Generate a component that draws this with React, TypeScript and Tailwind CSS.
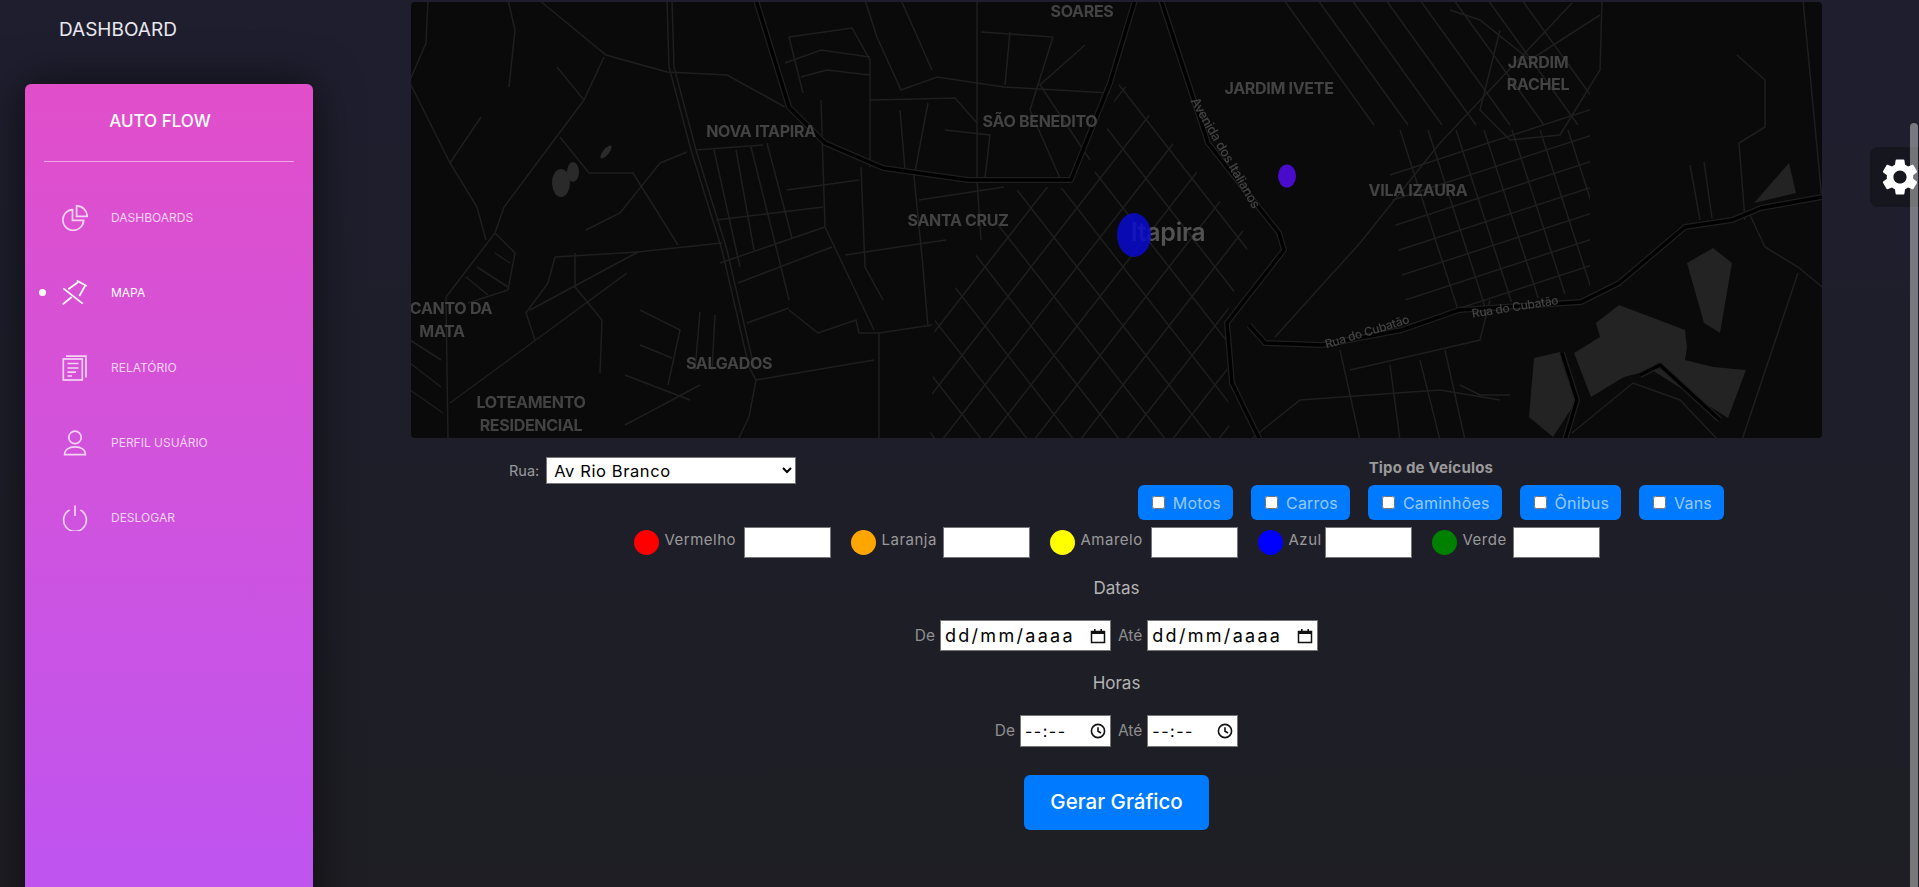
import { MdSettings } from "react-icons/md";

const font = "[font-family:Inter,'Liberation_Sans',sans-serif]";

// road polylines, in page coordinates of the reference
const roads = [
  "667,0 669,67 691,150 722,250 749,367 756,380 749,417 738,440",
  "672,0 674,67 696,150 727,250 754,367",
  "539,0 606,55 667,72 727,75 785,107",
  "604,57 584,100 504,207 495,233 446,297 448,440",
  "410,83 432,127 450,163 477,207 486,240",
  "428,0 426,43 410,80",
  "508,0 515,30 509,87",
  "557,67 584,100",
  "481,117 450,163",
  "687,152 660,163 620,213 586,230",
  "560,137 589,173 633,173 678,245",
  "638,252 722,243",
  "555,257 638,252 530,310",
  "555,257 548,283 526,313 535,340",
  "575,253 575,287 602,320 600,373",
  "627,273 450,403",
  "410,340 441,360",
  "410,363 441,387",
  "410,390 443,413",
  "477,267 508,287",
  "466,277 488,295",
  "495,253 510,263",
  "495,233 515,253 508,290 468,303",
  "756,380 874,360",
  "789,310 818,333 856,320 859,333 879,333 932,325",
  "879,333 879,440",
  "714,150 740,267",
  "736,150 754,250",
  "751,147 776,247 789,300",
  "767,143 792,238",
  "696,150 763,145",
  "716,220 823,207",
  "787,190 859,180",
  "720,263 825,227",
  "738,283 832,247",
  "747,323 789,308",
  "821,100 825,227 874,330",
  "861,167 865,267 883,300",
  "845,255 946,240",
  "928,103 914,177 923,267 928,327",
  "789,37 803,93",
  "789,37 852,28 870,60 870,167",
  "785,63 821,50 870,57",
  "801,77 827,70 870,75",
  "870,100 955,98 977,123",
  "865,0 877,37 901,90 937,77 1004,87 1110,93",
  "977,0 977,180 981,240",
  "901,0 932,70",
  "981,32 1053,37",
  "919,200 1004,187",
  "640,310 680,330 668,385",
  "700,312 695,370",
  "715,315 712,370",
  "625,375 690,400",
  "640,345 672,358",
  "625,425 700,385",
  "1010,32 1005,85",
  "1053,37 1030,110 1060,178",
  "1085,45 1040,85 1090,160",
  "900,110 905,170",
  "945,130 990,135 985,178",
  "1572,3 1440,143 1360,243 1275,337",
  "1450,10 1480,20 1530,60 1600,15",
  "1500,30 1480,110 1510,140 1560,135 1600,70 1602,0",
  "1803,0 1822,200",
  "1798,273 1742,440",
  "1749,213 1765,247 1798,267 1822,287",
  "1737,55 1765,80 1765,127 1739,143 1745,220",
  "1690,165 1700,220",
  "1704,162 1712,218",
  "1572,433 1633,383 1680,400 1718,440",
  "1250,440 1300,400 1440,390 1500,400",
  "1460,385 1480,395 1510,395",
  "1350,370 1480,340 1490,300",
  "1390,365 1400,440",
  "1420,360 1440,440",
  "1445,350 1465,440",
  "1340,350 1360,440",
];

const darkRoads = [
  "756,0 789,107 825,143 883,168 968,180 1071,180 1110,83 1135,0",
  "1161,0 1208,143 1279,233 1284,250 1227,323 1232,383 1260,440",
  "1249,325 1265,343 1322,345 1402,330 1459,310 1581,302 1619,283 1685,227 1732,220 1761,208 1822,197",
  "1562,353 1577,400 1565,440",
  "1640,375 1660,365 1720,420",
];

const blobs = [
  "1687,263 1713,248 1732,263 1720,333 1704,323",
  "1596,323 1619,305 1685,330 1687,347 1685,360 1713,367 1746,370 1728,418 1652,370 1624,377 1591,397 1574,353 1600,337",
  "1534,358 1560,352 1577,400 1553,437 1529,417",
  "1754,203 1789,163 1796,193",
];

const labels = [
  { t: "SOARES", x: 1082, y: 17 },
  { t: "NOVA ITAPIRA", x: 761, y: 137 },
  { t: "SÃO BENEDITO", x: 1040, y: 127 },
  { t: "SANTA CRUZ", x: 958, y: 226 },
  { t: "CANTO DA", x: 451, y: 314 },
  { t: "MATA", x: 442, y: 337 },
  { t: "SALGADOS", x: 729, y: 369 },
  { t: "LOTEAMENTO", x: 531, y: 408 },
  { t: "RESIDENCIAL", x: 531, y: 431 },
  { t: "JARDIM IVETE", x: 1279, y: 94 },
  { t: "JARDIM", x: 1538, y: 68 },
  { t: "RACHEL", x: 1538, y: 90 },
  { t: "VILA IZAURA", x: 1418, y: 196 },
];

// repeated street families, clipped to the blocks they belong to
const diamonds: string[] = [];
for (let i = -8; i < 14; i++) {
  const x = 900 + i * 46;
  diamonds.push(`${x},40 ${x + 312},440`);
  diamonds.push(`${x + 400},40 ${x + 88},440`);
}
const fans: string[] = [];
for (let i = 0; i < 9; i++) {
  fans.push(`${1250 + i * 34},0 ${1340 + i * 34},125`);
  fans.push(`${1400 + i * 28},130 ${1500 + i * 28},440`);
}
for (let i = 0; i < 9; i++) {
  fans.push(`1390,${275 + i * 26 - 100} 1620,${200 + i * 26 - 100}`);
}

function MapView() {
  return (
    <div className="h-[436px] w-full overflow-hidden rounded-[4px] bg-[#0a0a0a]">
      <svg viewBox="411 2 1411 436" className="block h-full w-full">
        <defs>
          <clipPath id="diamondBlock">
            <polygon points="1020,185 1090,190 1120,80 1195,170 1250,240 1225,320 1230,440 930,440 935,320" />
          </clipPath>
          <clipPath id="fanBlock">
            <polygon points="1265,0 1590,0 1590,290 1460,310 1410,335 1400,262 1385,140 1300,60" />
          </clipPath>
        </defs>
        <g className="blur-[0.6px]">
          {blobs.map((p) => (
            <polygon key={p} points={p} fill="#232323" />
          ))}
          <ellipse cx="561" cy="183" rx="9" ry="14" fill="#2a2a2a" />
          <ellipse cx="573" cy="172" rx="6" ry="10" fill="#2a2a2a" />
          <ellipse cx="606" cy="152" rx="3" ry="8" fill="#2a2a2a" transform="rotate(40 606 152)" />
          <g fill="none" stroke="#1f1f1f" strokeWidth="1.5">
            <g clipPath="url(#diamondBlock)">
              {diamonds.map((p) => (
                <polyline key={p} points={p} />
              ))}
            </g>
            <g clipPath="url(#fanBlock)">
              {fans.map((p) => (
                <polyline key={p} points={p} />
              ))}
            </g>
            {roads.map((p) => (
              <polyline key={p} points={p} />
            ))}
          </g>
          <g fill="none" strokeLinejoin="round">
            {darkRoads.map((p) => (
              <g key={p}>
                <polyline points={p} stroke="#1f1f1f" strokeWidth="6" />
                <polyline points={p} stroke="#000" strokeWidth="3.5" />
              </g>
            ))}
          </g>
          <g
            fill="#434343"
            fontFamily="Inter, sans-serif"
            fontWeight="700"
            fontSize="16"
            textAnchor="middle"
            letterSpacing="-0.3"
          >
            {labels.map((l) => (
              <text key={l.t} x={l.x} y={l.y}>
                {l.t}
              </text>
            ))}
            <text x="1168" y="241" fontSize="25" fontWeight="600" fill="#525252">
              Itapira
            </text>
            <text x="1367" y="336" fontSize="12" fontWeight="500" transform="rotate(-17 1367 332)">
              Rua do Cubatão
            </text>
            <text x="1515" y="311" fontSize="12" fontWeight="500" transform="rotate(-9 1515 307)">
              Rua do Cubatão
            </text>
            <text x="1225" y="157" fontSize="13" fontWeight="500" transform="rotate(60 1225 153)">
              Avenida dos Italianos
            </text>
          </g>
        </g>
        <ellipse cx="1134" cy="235" rx="17" ry="22" fill="#0a0ad0" fillOpacity="0.85" />
        <ellipse cx="1287" cy="176" rx="9" ry="11.5" fill="#4a0ccc" />
      </svg>
    </div>
  );
}

function PieIcon() {
  return (
    <svg viewBox="0 0 26 26" className="h-[26px] w-[26px]" fill="none" stroke="currentColor" strokeWidth="1.7">
      <path d="M10.5 4.6A10.4 10.4 0 1 0 21.6 15.4H10.5Z" />
      <path d="M14.6 0.9A10.6 10.6 0 0 1 25.2 11.4H14.6Z" />
    </svg>
  );
}

function PinIcon() {
  return (
    <svg viewBox="0 0 26 26" className="h-[26px] w-[26px]" fill="none" stroke="currentColor" strokeWidth="1.7">
      <path d="M14.7 .6 24.7 6" />
      <path d="M16.3 2 6.3 9.3" />
      <path d="M23 6 17.3 16" />
      <path d="M1.3 8.3 20.7 23.7" />
      <path d="M9.7 17 .7 24.3" />
    </svg>
  );
}

function ReportIcon() {
  return (
    <svg viewBox="0 0 26 26" className="h-[26px] w-[26px]" fill="none" stroke="currentColor" strokeWidth="1.7">
      <rect x="1.3" y="4" width="19" height="21" />
      <path d="M4 1.2H24V22.4" />
      <path d="M5.5 8.5H16.5M5.5 13H16.5M5.5 17.2H14M5.5 21H10" />
    </svg>
  );
}

function UserIcon() {
  return (
    <svg viewBox="0 0 26 26" className="h-[26px] w-[26px]" fill="none" stroke="currentColor" strokeWidth="1.7">
      <circle cx="13" cy="7.4" r="6.2" />
      <path d="M2.6 24.6C2.6 19.6 7 16.8 13 16.8S23.4 19.6 23.4 24.6Z" />
    </svg>
  );
}

function PowerIcon() {
  return (
    <svg viewBox="0 0 26 26" className="h-[26px] w-[26px]" fill="none" stroke="currentColor" strokeWidth="1.7">
      <path d="M13 .4V11" />
      <path d="M7.6 5A11.4 11.4 0 1 0 18.4 5" />
    </svg>
  );
}

const menu = [
  { label: "DASHBOARDS", icon: <PieIcon /> },
  { label: "MAPA", icon: <PinIcon />, active: true },
  { label: "RELATÓRIO", icon: <ReportIcon /> },
  { label: "PERFIL USUÁRIO", icon: <UserIcon /> },
  { label: "DESLOGAR", icon: <PowerIcon /> },
];

function Sidebar() {
  return (
    <aside className="h-[920px] w-[288px] rounded-t-[6px] bg-gradient-to-t from-[#ba54f5] to-[#e14eca] shadow-[0_0_45px_rgba(0,0,0,0.6)]">
      <div className="mx-[19px] flex h-[78px] items-center justify-center border-b border-white/50 pb-[1px] pr-[18px]">
        <span className="text-[17px] font-medium text-white">AUTO FLOW</span>
      </div>
      <nav className="mt-[18px] flex flex-col">
        {menu.map((m) => (
          <div key={m.label} className={`relative flex h-[75px] items-center pl-[37px] ${m.active ? "text-white" : "text-white/75"}`}>
            {m.active && <span className="absolute left-[14px] h-[7px] w-[7px] rounded-full bg-white" />}
            {m.icon}
            <span className="ml-[23px] text-[12px]">{m.label}</span>
          </div>
        ))}
      </nav>
    </aside>
  );
}

function VehicleCheck({ label }: { label: string }) {
  return (
    <label className="flex h-[35px] items-center gap-[8px] rounded-[6px] bg-[#007bff] pl-[14px] pr-[12px] text-[16px] tracking-[0.2px] text-white/60">
      <input type="checkbox" className="h-[13px] w-[13px]" />
      {label}
    </label>
  );
}

function ColorField({ name, color, labelWidth }: { name: string; color: string; labelWidth: string }) {
  return (
    <div className="flex items-center gap-[6px]">
      <span className="h-[25px] w-[25px] rounded-full" style={{ backgroundColor: color }} />
      <span className={`mb-[4px] text-[15px] tracking-[0.5px] whitespace-nowrap text-[#9a9a9a] ${labelWidth}`}>{name}</span>
      <input type="text" className="h-[31px] w-[87px] border border-[#767676] bg-white" />
    </div>
  );
}

function PickerField({ kind }: { kind: "date" | "time" }) {
  const isDate = kind === "date";
  return (
    <div className={`flex items-center justify-between border border-[#767676] bg-white pl-[4px] pr-[4px] text-black ${isDate ? "h-[31px] w-[171px]" : "h-[32px] w-[91px]"}`}>
      <span className={isDate ? "text-[18px] tracking-[2.3px]" : "text-[16px] tracking-[1.5px]"}>
        {isDate ? "dd/mm/aaaa" : "--:--"}
      </span>
      {isDate ? (
        <svg viewBox="0 0 16 16" className="h-[16px] w-[16px]">
          <path d="M1.5 3.5h13v11h-13z" fill="none" stroke="#111" strokeWidth="1.5" />
          <path d="M1.5 3h13v3h-13zM4 1h1.6v2H4zM10.4 1H12v2h-1.6z" fill="#111" />
        </svg>
      ) : (
        <svg viewBox="0 0 16 16" className="h-[16px] w-[16px]" fill="none" stroke="#111" strokeWidth="1.6">
          <circle cx="8" cy="8" r="6.6" />
          <path d="M8 4.2V8.2L11 10" />
        </svg>
      )}
    </div>
  );
}

function RangeRow({ kind }: { kind: "date" | "time" }) {
  return (
    <div className="flex items-center justify-center text-[15.5px] text-[#8f8f8f]">
      <span className="mr-[5px]">De</span>
      <PickerField kind={kind} />
      <span className="ml-[7px] mr-[5px]">Até</span>
      <PickerField kind={kind} />
    </div>
  );
}

export default function App() {
  return (
    <div className={`relative flex h-[887px] overflow-hidden bg-gradient-to-b from-[#1e1e2f] to-[#1e1e24] ${font}`}>
      <div className="w-[411px] shrink-0 pl-[25px]">
        <div className="flex h-[84px] items-start pl-[34px] pt-[18px]">
          <span className="text-[19px] leading-[24px] text-[#e8e8ee]">DASHBOARD</span>
        </div>
        <Sidebar />
      </div>

      <main className="w-[1411px] shrink-0 pt-[2px]">
        <MapView />

        <div className="mt-[19px] flex items-start justify-between px-[98px]">
          <div className="flex items-center gap-[7px] text-[14.5px] text-[#9a9a9a]">
            <span>Rua:</span>
            <select defaultValue="Av Rio Branco" className="h-[27px] w-[250px] border border-[#767676] bg-white pl-[3px] text-[16.5px] tracking-[0.6px] text-black">
              <option>Av Rio Branco</option>
            </select>
          </div>
          <div className="flex flex-col items-center pt-[1px]">
            <span className="mb-[7px] text-[15px] leading-[20px] font-bold tracking-[0.2px] text-[#9a9a9a]">Tipo de Veículos</span>
            <div className="flex gap-[18px]">
              {["Motos", "Carros", "Caminhões", "Ônibus", "Vans"].map((v) => (
                <VehicleCheck key={v} label={v} />
              ))}
            </div>
          </div>
        </div>

        <div className="mt-[7px] flex justify-center gap-[20px]">
          <ColorField name="Vermelho" color="#ff0000" labelWidth="w-[73px]" />
          <ColorField name="Laranja" color="#ffa500" labelWidth="w-[55px]" />
          <ColorField name="Amarelo" color="#ffff00" labelWidth="w-[64px]" />
          <ColorField name="Azul" color="#0000ff" labelWidth="w-[30px]" />
          <ColorField name="Verde" color="#008000" labelWidth="w-[44px]" />
        </div>

        <p className="mt-[18px] text-center text-[17px] leading-[24px] text-[#b4b4b4]">Datas</p>
        <div className="mt-[20px]">
          <RangeRow kind="date" />
        </div>
        <p className="mt-[20px] text-center text-[17px] leading-[24px] text-[#b4b4b4]">Horas</p>
        <div className="mt-[20px]">
          <RangeRow kind="time" />
        </div>
        <div className="mt-[28px] flex justify-center">
          <button className="h-[55px] w-[185px] rounded-[6px] bg-[#007bff] text-[20.5px] font-medium text-white">
            Gerar Gráfico
          </button>
        </div>
      </main>

      <div className="absolute right-0 top-[147px] flex h-[60px] w-[49px] items-center rounded-l-[8px] bg-[#16161f] pl-[8px]">
        <MdSettings className="h-[44px] w-[44px] shrink-0 text-white" />
      </div>
      <div className="absolute right-[1px] top-[123px] bottom-0 w-[8px] rounded-t-[4px] bg-white/40" />
    </div>
  );
}
